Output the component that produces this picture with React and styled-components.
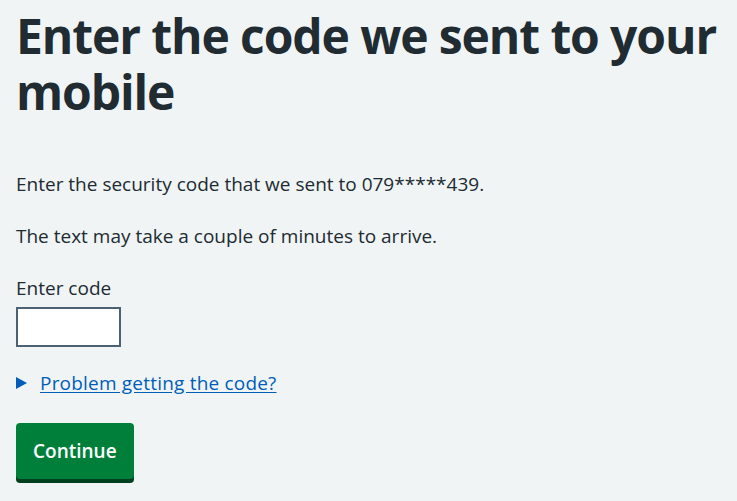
import styled, { createGlobalStyle } from "styled-components"

const GlobalStyle = createGlobalStyle`
    html, body {
        margin: 0;
        padding: 0;
        background-color: #f0f4f5;
    }
    body {
        font-family: "Open Sans", "Noto Sans", Arial, sans-serif;
        color: #212b32;
    }
`

export default function App() {
    return (
        <>
            <GlobalStyle />
            <Main>
                <Heading>Enter the code we sent to your mobile</Heading>
                <Paragraph>Enter the security code that we sent to 079*****439.</Paragraph>
                <Paragraph>The text may take a couple of minutes to arrive.</Paragraph>
                <FormGroup>
                    <Label htmlFor="otp">Enter code</Label>
                    <CodeInput id="otp" name="otp" type="text" autoComplete="one-time-code" />
                </FormGroup>
                <Details>
                    <Summary>
                        <SummaryText>Problem getting the code?</SummaryText>
                    </Summary>
                </Details>
                <Button type="submit">Continue</Button>
            </Main>
        </>
    )
}

const Main = styled.main`
    display: flex;
    flex-direction: column;
    align-items: flex-start;
    padding: 8px 16px 16px;
`

const Heading = styled.h1`
    margin: 0 0 50px;
    font-size: 48px;
    line-height: 56px;
    font-weight: 700;
    letter-spacing: -1.1px;
`

const Paragraph = styled.p`
    margin: 0 0 24px;
    font-size: 19px;
    line-height: 28px;
`

const FormGroup = styled.div`
    display: flex;
    flex-direction: column;
    align-items: flex-start;
    margin-bottom: 22px;
`

const Label = styled.label`
    font-size: 19px;
    line-height: 28px;
    margin-bottom: 5px;
`

const CodeInput = styled.input`
    box-sizing: border-box;
    width: 105px;
    height: 40px;
    padding: 4px;
    border: 2px solid #4c6272;
    border-radius: 0;
    background-color: #ffffff;
    font-family: inherit;
    font-size: 19px;
`

const Details = styled.details`
    margin-bottom: 26px;
`

const Summary = styled.summary`
    display: inline-block;
    position: relative;
    padding-left: 24px;
    list-style: none;
    cursor: pointer;
    color: #005eb8;
    font-size: 19px;
    line-height: 28px;

    &::-webkit-details-marker {
        display: none;
    }

    &::before {
        content: "";
        position: absolute;
        left: 0;
        top: 8px;
        width: 0;
        height: 0;
        border-style: solid;
        border-color: transparent;
        border-width: 6.5px 0 6.5px 11px;
        border-left-color: #005eb8;
    }
`

const SummaryText = styled.span`
    text-decoration: underline;
    text-underline-offset: 2px;
    letter-spacing: 0.2px;
`

const Button = styled.button`
    padding: 14px 17px;
    border: none;
    border-radius: 4px;
    background-color: #007f3b;
    box-shadow: 0 4px 0 #00401e;
    color: #ffffff;
    font-family: inherit;
    font-size: 19px;
    font-weight: 600;
    line-height: 28px;
    cursor: pointer;
`
